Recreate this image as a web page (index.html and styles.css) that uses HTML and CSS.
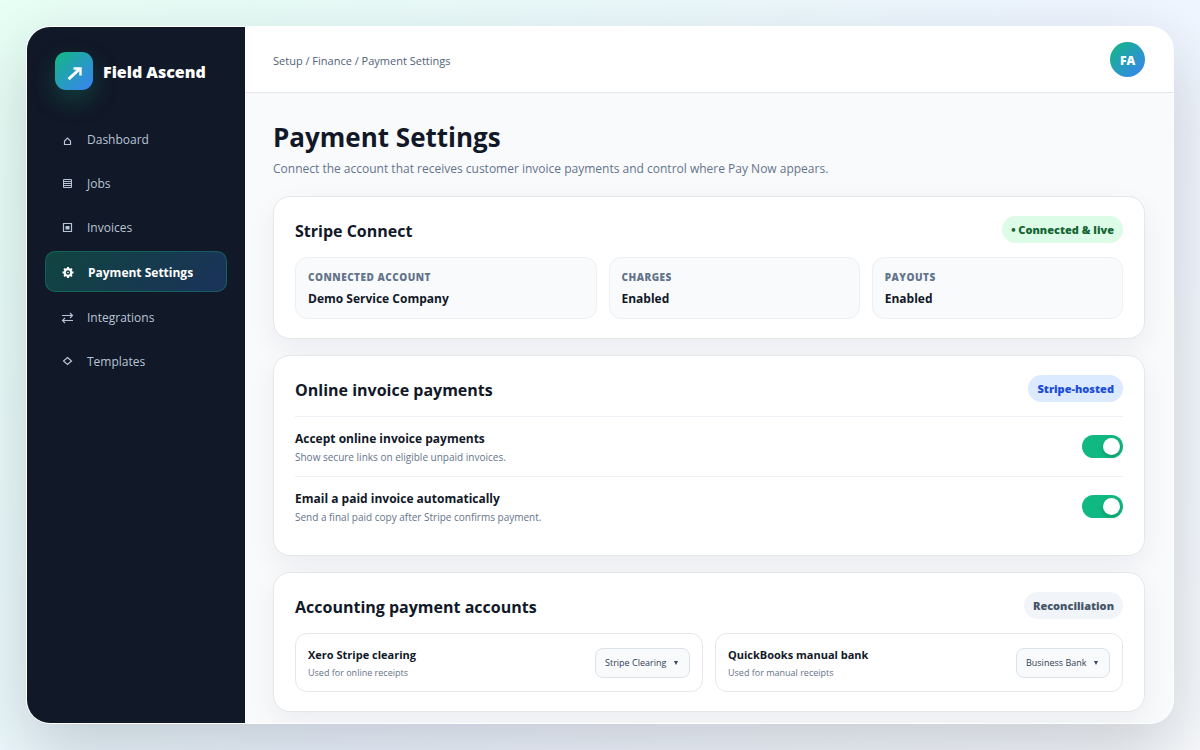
FILE: index.html
```html
<!DOCTYPE html>
<html lang="en">
<head>
<meta charset="utf-8">
<title>Payment Settings – Field Ascend</title>
<link rel="stylesheet" href="styles.css">
</head>
<body>
<div class="app">
  <aside class="sidebar">
    <div class="brand">
      <span class="brand-mark"><svg viewBox="0 0 18 18" width="18" height="18" aria-hidden="true"><path d="M3.600 16.200 14 6.500" fill="none" stroke="currentColor" stroke-width="3"/><path d="M8.500 5.500h7v7" fill="none" stroke="currentColor" stroke-width="2.400"/></svg></span>
      <span class="brand-name">Field Ascend</span>
    </div>
    <nav class="nav">
      <a class="nav-item" href="#"><svg class="nav-icon" viewBox="0 0 13 13" aria-hidden="true"><path d="M3.500 11.500V8L6.500 5l3 3v3.500z" fill="none" stroke="currentColor" stroke-width="1.200"/></svg>Dashboard</a>
      <a class="nav-item" href="#"><svg class="nav-icon" viewBox="0 0 13 13" aria-hidden="true"><path d="M2.500 2.500h8v8h-8zM2.500 4.500h8M2.500 6.500h8M2.500 8.500h8" fill="none" stroke="currentColor"/></svg>Jobs</a>
      <a class="nav-item" href="#"><svg class="nav-icon" viewBox="0 0 13 13" aria-hidden="true"><path d="M2.500 2.500h8v8h-8z" fill="none" stroke="currentColor" stroke-width="1.200"/><path d="M4.500 5h4v3.500h-4z" fill="currentColor"/></svg>Invoices</a>
      <a class="nav-item active" href="#" aria-current="page"><svg class="nav-icon" viewBox="0 0 13 13" aria-hidden="true"><circle cx="6" cy="6.500" r="3.300" fill="none" stroke="currentColor" stroke-width="2.200"/><circle cx="6" cy="6.500" r=".8" fill="currentColor"/><path d="M6 1v2M6 10v2M.5 6.500h2M9.500 6.500h2M2.100 2.600l1.400 1.400M8.500 9l1.400 1.400M2.100 10.400 3.500 9M8.500 4l1.400-1.400" stroke="currentColor" stroke-width="2"/></svg>Payment Settings</a>
      <a class="nav-item" href="#"><svg class="nav-icon" viewBox="0 0 13 13" aria-hidden="true"><path d="M1 4.500h10.500M9 2l2.500 2.500L9 7M12 9.500H1.500M4 7 1.500 9.500 4 12" fill="none" stroke="currentColor" stroke-width="1.100"/></svg>Integrations</a>
      <a class="nav-item" href="#"><svg class="nav-icon" viewBox="0 0 13 13" aria-hidden="true"><path d="M6.500 2.500 10.500 6 6.500 9.500 2.500 6z" fill="none" stroke="currentColor" stroke-width="1.200"/></svg>Templates</a>
    </nav>
  </aside>
  <div class="main">
    <header class="topbar">
      <div class="crumbs">Setup / Finance / Payment Settings</div>
      <div class="avatar">FA</div>
    </header>
    <main class="content">
      <h1 class="title">Payment Settings</h1>
      <p class="subtitle">Connect the account that receives customer invoice payments and control where Pay Now appears.</p>

      <section class="card">
        <div class="card-head"><h2 class="card-title">Stripe Connect</h2><span class="pill pill-green">• Connected &amp; live</span></div>
        <div class="stats">
          <div class="stat"><div class="stat-label">Connected account</div><div class="strong">Demo Service Company</div></div>
          <div class="stat"><div class="stat-label">Charges</div><div class="strong">Enabled</div></div>
          <div class="stat"><div class="stat-label">Payouts</div><div class="strong">Enabled</div></div>
        </div>
      </section>

      <section class="card">
        <div class="card-head"><h2 class="card-title">Online invoice payments</h2><span class="pill pill-blue">Stripe-hosted</span></div>
        <div class="row">
          <label class="row-label" for="accept"><span class="strong">Accept online invoice payments</span><span class="hint">Show secure links on eligible unpaid invoices.</span></label>
          <input class="toggle" type="checkbox" role="switch" id="accept" checked>
        </div>
        <div class="row">
          <label class="row-label" for="email"><span class="strong">Email a paid invoice automatically</span><span class="hint">Send a final paid copy after Stripe confirms payment.</span></label>
          <input class="toggle" type="checkbox" role="switch" id="email" checked>
        </div>
      </section>

      <section class="card">
        <div class="card-head"><h2 class="card-title">Accounting payment accounts</h2><span class="pill pill-gray">Reconciliation</span></div>
        <div class="accounts">
          <div class="account">
            <label for="xero"><span class="account-name">Xero Stripe clearing</span><span class="account-hint">Used for online receipts</span></label>
            <span class="picker"><select id="xero"><option>Stripe Clearing</option></select><svg class="caret" viewBox="0 0 4 4" aria-hidden="true"><path d="M0 0h4L2 4z" fill="currentColor"/></svg></span>
          </div>
          <div class="account">
            <label for="qb"><span class="account-name">QuickBooks manual bank</span><span class="account-hint">Used for manual receipts</span></label>
            <span class="picker"><select id="qb"><option>Business Bank</option></select><svg class="caret" viewBox="0 0 4 4" aria-hidden="true"><path d="M0 0h4L2 4z" fill="currentColor"/></svg></span>
          </div>
        </div>
      </section>
    </main>
  </div>
</div>
</body>
</html>
```
FILE: styles.css
```css
* { box-sizing: border-box; }

body {
  margin: 0;
  height: 100vh;
  padding: 26px;
  overflow: hidden;
  background: linear-gradient(135deg, #e7fff5 0%, #eef5ff 55%, #f8fafc 100%);
  color: #111827;
  font-family: "Open Sans", "Noto Sans", sans-serif;
  font-size: 12px;
}

h1, h2, p { margin: 0; }

.app {
  display: grid;
  grid-template-columns: 218px 1fr;
  height: 100%;
  overflow: hidden;
  border: 1px solid #fff;
  border-radius: 24px;
  background: #f9fafc;
  box-shadow: 0 26px 70px rgba(15, 23, 42, 0.2);
}

.sidebar { padding: 25px 18px; background: #111827; }

.brand { display: flex; align-items: center; gap: 10px; padding: 0 10px; }

.brand-mark {
  display: grid;
  place-items: center;
  width: 38px;
  height: 38px;
  padding-top: 2px;
  border-radius: 11px;
  background: linear-gradient(135deg, #10b981, #3b82f6);
  box-shadow: 0 10px 25px rgba(16, 185, 129, 0.25);
  color: #fff;
}

.brand-name { padding-top: 2px; color: #fff; font-size: 16px; font-weight: 800; }

.nav { display: grid; gap: 5px; margin-top: 29px; }

.nav-item {
  display: flex;
  align-items: center;
  gap: 13px;
  padding: 12px 16px 10px;
  border-radius: 10px;
  color: #b8c5d6;
  font-size: 12px;
  line-height: 17px;
  text-decoration: none;
}

.nav-icon { width: 13px; height: 13px; }

.active {
  border: 1px solid rgba(16, 185, 129, 0.3);
  background: linear-gradient(135deg, rgba(16, 185, 129, 0.28), rgba(59, 130, 246, 0.25));
  color: #fff;
  font-weight: 700;
}

.topbar {
  display: flex;
  align-items: center;
  justify-content: space-between;
  height: 66px;
  padding: 0 28px;
  border-bottom: 1px solid #e5e7eb;
  background: #fff;
}

.crumbs { padding-top: 2px; color: #526277; font-size: 11px; }

.avatar {
  display: grid;
  place-items: center;
  width: 35px;
  height: 35px;
  padding-top: 1px;
  border-radius: 50%;
  background: linear-gradient(135deg, #10b981, #3b82f6);
  color: #fff;
  font-size: 12px;
  font-weight: 800;
}

.content { padding: 26px 28px; }

.title { font-size: 26px; line-height: 36px; font-weight: 700; }

.subtitle { margin: 5px 0 18px; color: #64748b; font-size: 12px; line-height: 18px; }

.card {
  margin-bottom: 16px;
  padding: 19px 21px;
  border: 1px solid #e5e7eb;
  border-radius: 17px;
  background: #fff;
  box-shadow: 0 10px 28px rgba(15, 23, 42, 0.06);
}

.card-head {
  display: flex;
  align-items: center;
  justify-content: space-between;
  margin-bottom: 14px;
}

.card-title { padding-top: 2px; font-size: 16px; line-height: 24px; font-weight: 700; }

.pill {
  padding: 6px 9px;
  border-radius: 999px;
  font-size: 11px;
  line-height: 15px;
  font-weight: 800;
}

.pill-green { background: #dcfce7; color: #166534; }
.pill-blue { background: #dbeafe; color: #1d4ed8; }
.pill-gray { background: #f1f5f9; color: #475569; }

.stats { display: grid; grid-template-columns: 1.2fr 1fr 1fr; gap: 12px; }

.stat {
  padding: 12px 12px 10px;
  border: 1px solid #edf0f4;
  border-radius: 12px;
  background: #f8fafc;
}

.stat-label {
  margin-bottom: 6px;
  color: #64748b;
  font-size: 10px;
  line-height: 14px;
  font-weight: 800;
  letter-spacing: 0.05em;
  text-transform: uppercase;
}

.strong { display: block; font-size: 12px; line-height: 18px; font-weight: 700; }

.row {
  display: flex;
  align-items: center;
  justify-content: space-between;
  padding: 11px 0;
  border-top: 1px solid #edf0f4;
}

.row-label { padding-top: 2px; }

.hint { display: block; margin-top: 2px; color: #64748b; font-size: 10px; line-height: 15px; }

.toggle {
  display: flex;
  width: 41px;
  height: 23px;
  margin: 0;
  padding: 3px;
  border-radius: 999px;
  background: #cbd5e1;
  appearance: none;
}

.toggle::before {
  content: "";
  width: 17px;
  height: 17px;
  border-radius: 50%;
  background: #fff;
  box-shadow: 0 2px 5px rgba(0, 0, 0, 0.2);
}

.toggle:checked { justify-content: flex-end; background: #10b981; }

.accounts { display: grid; grid-template-columns: 1fr 1fr; gap: 12px; }

.account {
  display: flex;
  align-items: center;
  justify-content: space-between;
  padding: 12px;
  border: 1px solid #e5e7eb;
  border-radius: 12px;
}

.account-name { display: block; font-size: 11px; line-height: 18px; font-weight: 700; }

.account-hint { display: block; margin-top: 2px; color: #64748b; font-size: 9px; line-height: 13px; }

.picker { display: grid; align-items: center; color: #334155; }

.picker select {
  grid-area: 1 / 1;
  height: 30px;
  padding: 0 22px 0 9px;
  border: 1px solid #dbe2ea;
  border-radius: 8px;
  background: #f8fafc;
  color: inherit;
  font-family: inherit;
  font-size: 9px;
  appearance: none;
}

.caret {
  grid-area: 1 / 1;
  justify-self: end;
  width: 4px;
  height: 4px;
  margin-right: 12px;
  pointer-events: none;
}
```
